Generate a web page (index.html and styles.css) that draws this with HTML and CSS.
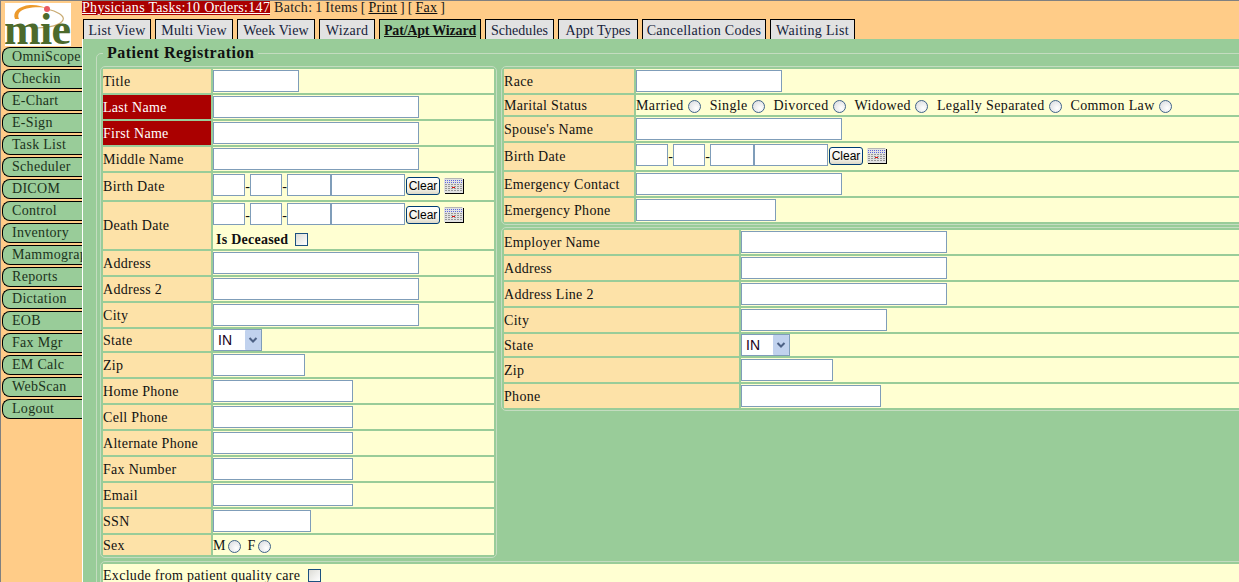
FILE: index.html
```html
<!DOCTYPE html>
<html lang="en">
<head>
<meta charset="utf-8">
<title>Patient Registration</title>
<link rel="stylesheet" href="styles.css">
</head>
<body>
<svg class="defs" width="0" height="0" aria-hidden="true">
  <symbol id="cal" viewBox="0 0 20 16">
    <rect x="1" y="1" width="19" height="15" fill="#000"/>
    <rect x="0" y="0" width="19" height="15" fill="#e2e2e2"/>
    <path d="M1 .5h17" stroke="#b4b4b4"/>
    <path d="M1 2.500h17M1 4.500h17" stroke="#5f68dc" stroke-dasharray="1 1"/>
    <path d="M1 6.500h17M1 8.500h17M1 10.500h17M1 12.500h17" stroke="#989898" stroke-dasharray="2 1"/>
    <rect x="8" y="9" width="3" height="1" fill="#e01010"/>
  </symbol>
</svg>
<div class="app">
  <aside class="side">
    <div class="logo">
      <svg width="66" height="43" viewBox="0 0 66 43">
        <path d="M42 6C52 8 60 13 58 17 56 22 44 25 32 25" fill="none" stroke="#c9ab72" stroke-width="1.2"/>
        <path d="M10 16C7 9 14 3 25 2 31 1.500 37 3 42 5 34 3.500 18 4 14 10 13 12 13 14 14 16z" fill="#ec9a2c"/>
        <circle cx="42" cy="6" r="3" fill="#ea5a62"/>
        <text class="logo-text" x="-1" y="41" textLength="67">mie</text>
      </svg>
    </div>
    <nav class="menu">
      <a class="menu-item">OmniScope</a>
      <a class="menu-item">Checkin</a>
      <a class="menu-item">E-Chart</a>
      <a class="menu-item">E-Sign</a>
      <a class="menu-item">Task List</a>
      <a class="menu-item">Scheduler</a>
      <a class="menu-item">DICOM</a>
      <a class="menu-item">Control</a>
      <a class="menu-item">Inventory</a>
      <a class="menu-item">Mammography</a>
      <a class="menu-item">Reports</a>
      <a class="menu-item">Dictation</a>
      <a class="menu-item">EOB</a>
      <a class="menu-item">Fax Mgr</a>
      <a class="menu-item">EM Calc</a>
      <a class="menu-item">WebScan</a>
      <a class="menu-item">Logout</a>
    </nav>
  </aside>
  <main class="content">
    <div class="status"><a class="alert">Physicians Tasks:10 Orders:147</a> <span class="batch">Batch: 1 Items [ <a class="link">Print</a> ] [ <a class="link">Fax</a> ]</span></div>
    <div class="tabs">
      <a class="tab">List View</a>
      <a class="tab">Multi View</a>
      <a class="tab">Week View</a>
      <a class="tab">Wizard</a>
      <a class="tab active">Pat/Apt Wizard</a>
      <a class="tab">Schedules</a>
      <a class="tab">Appt Types</a>
      <a class="tab">Cancellation Codes</a>
      <a class="tab">Waiting List</a>
    </div>
    <div class="panel">
      <fieldset class="outer">
        <legend>Patient Registration</legend>
        <div class="columns">
          <fieldset class="box">
            <table class="form left">
              <colgroup><col class="c108"><col class="c281"></colgroup>
              <tr><th>Title</th><td><input class="w86" type="text"></td></tr>
              <tr><th class="req">Last Name</th><td><input class="w206" type="text"></td></tr>
              <tr><th class="req">First Name</th><td><input class="w206" type="text"></td></tr>
              <tr><th>Middle Name</th><td><input class="w206" type="text"></td></tr>
              <tr><th class="tall">Birth Date</th><td class="date-cell">
                <div class="date"><input class="w32" type="text"><span class="dash">-</span><input class="w32" type="text"><span class="dash">-</span><input class="w44" type="text"><input class="w74" type="text"><button class="clear" type="button">Clear</button><svg class="cal" width="20" height="16"><use href="#cal"/></svg></div>
              </td></tr>
              <tr><th class="tall">Death Date</th><td class="death-cell">
                <div class="date"><input class="w32" type="text"><span class="dash">-</span><input class="w32" type="text"><span class="dash">-</span><input class="w44" type="text"><input class="w74" type="text"><button class="clear" type="button">Clear</button><svg class="cal" width="20" height="16"><use href="#cal"/></svg></div>
                <div class="deceased"><b>Is Deceased</b><input class="check" type="checkbox"></div>
              </td></tr>
              <tr><th>Address</th><td><input class="w206" type="text"></td></tr>
              <tr><th>Address 2</th><td><input class="w206" type="text"></td></tr>
              <tr><th>City</th><td><input class="w206" type="text"></td></tr>
              <tr><th>State</th><td class="flush"><select class="state"><option>IN</option></select></td></tr>
              <tr><th>Zip</th><td><input class="w92" type="text"></td></tr>
              <tr><th>Home Phone</th><td><input class="w140" type="text"></td></tr>
              <tr><th>Cell Phone</th><td><input class="w140" type="text"></td></tr>
              <tr><th>Alternate Phone</th><td><input class="w140" type="text"></td></tr>
              <tr><th>Fax Number</th><td><input class="w140" type="text"></td></tr>
              <tr><th>Email</th><td><input class="w140" type="text"></td></tr>
              <tr><th>SSN</th><td><input class="w98" type="text"></td></tr>
              <tr class="h20"><th>Sex</th><td class="flush"><div class="radios tight">M<input class="radio" type="radio" name="sex"><span>F</span><input class="radio" type="radio" name="sex"></div></td></tr>
            </table>
          </fieldset>
          <div class="stack">
            <fieldset class="box">
              <table class="form right">
                <colgroup><col class="c130"><col class="c700"></colgroup>
                <tr><th>Race</th><td><input class="w146" type="text"></td></tr>
                <tr class="h20"><th>Marital Status</th><td class="flush"><div class="radios"><span>Married</span><input class="radio" type="radio" name="ms"><span>Single</span><input class="radio" type="radio" name="ms"><span>Divorced</span><input class="radio" type="radio" name="ms"><span>Widowed</span><input class="radio" type="radio" name="ms"><span>Legally Separated</span><input class="radio" type="radio" name="ms"><span>Common Law</span><input class="radio" type="radio" name="ms"></div></td></tr>
                <tr><th>Spouse's Name</th><td><input class="w206" type="text"></td></tr>
                <tr><th class="tall">Birth Date</th><td class="date-cell">
                  <div class="date"><input class="w32" type="text"><span class="dash">-</span><input class="w32" type="text"><span class="dash">-</span><input class="w44" type="text"><input class="w74" type="text"><button class="clear" type="button">Clear</button><svg class="cal" width="20" height="16"><use href="#cal"/></svg></div>
                </td></tr>
                <tr><th>Emergency Contact</th><td><input class="w206" type="text"></td></tr>
                <tr><th>Emergency Phone</th><td><input class="w140" type="text"></td></tr>
              </table>
            </fieldset>
            <fieldset class="box">
              <table class="form right">
                <colgroup><col class="c235"><col class="c595"></colgroup>
                <tr><th>Employer Name</th><td><input class="w206" type="text"></td></tr>
                <tr><th>Address</th><td><input class="w206" type="text"></td></tr>
                <tr><th>Address Line 2</th><td><input class="w206" type="text"></td></tr>
                <tr><th>City</th><td><input class="w146" type="text"></td></tr>
                <tr><th>State</th><td class="flush"><select class="state"><option>IN</option></select></td></tr>
                <tr><th>Zip</th><td><input class="w92" type="text"></td></tr>
                <tr><th>Phone</th><td><input class="w140" type="text"></td></tr>
              </table>
            </fieldset>
          </div>
        </div>
        <fieldset class="box wide">
          <table class="form bottom">
            <tr><td class="excl">Exclude from patient quality care<input class="check" type="checkbox"></td></tr>
          </table>
        </fieldset>
      </fieldset>
    </div>
  </main>
</div>
</body>
</html>
```
FILE: styles.css
```css
html, body {
  margin: 0;
  padding: 0;
  height: 100%;
  overflow: hidden;
}
body {
  background: #ffcc88;
  border-top: 1px solid #808080;
  border-left: 1px solid #808080;
  box-sizing: border-box;
  font-family: "Liberation Serif", serif;
  font-size: 14px;
  letter-spacing: 0.3px;
  color: #111;
}
.defs { position: absolute; }
.app {
  display: flex;
  height: 581px;
  width: 1238px;
  overflow: hidden;
}
.side {
  width: 81px;
  flex: none;
  overflow: hidden;
}
.logo {
  margin: 2px 0 0 4px;
  width: 66px;
  height: 43px;
  background: #fff;
}
.logo svg { display: block; }
.logo-text {
  font-family: "Liberation Serif", serif;
  font-weight: bold;
  font-size: 44px;
  letter-spacing: 0;
  fill: #4c6a2c;
}
.menu {
  display: flex;
  flex-direction: column;
  gap: 2px;
  margin: 1px 0 0 1px;
}
.menu-item {
  box-sizing: border-box;
  display: block;
  height: 20px;
  width: 90px;
  padding-left: 9px;
  line-height: 18px;
  white-space: nowrap;
  background: #99cc99;
  border: 1px solid #000;
  border-bottom-width: 1.5px;
  border-right: 0;
  border-radius: 8px 0 0 8px;
  color: #1c331c;
}
.content {
  flex: 1;
  min-width: 0;
  display: flex;
  flex-direction: column;
}
.status {
  height: 14px;
  line-height: 14px;
  white-space: nowrap;
  color: #222;
}
.batch { word-spacing: -1px; }
.alert {
  background: #aa0000;
  color: #fff;
  text-decoration: underline;
}
.link {
  color: #111;
  text-decoration: underline;
}
.tabs {
  display: flex;
  gap: 4px;
  margin: 4px 0 0 1px;
  height: 20px;
}
.tab {
  box-sizing: border-box;
  flex: none;
  height: 20px;
  padding: 1px 0 0;
  line-height: 20px;
  text-align: center;
  background: #e2e2e2;
  border: 1px solid #000;
  border-bottom: 0;
  color: #16233a;
  white-space: nowrap;
}
.tab:nth-child(1) { width: 68px; }
.tab:nth-child(2) { width: 78px; letter-spacing: 0.15px; }
.tab:nth-child(3) { width: 78px; letter-spacing: 0.15px; }
.tab:nth-child(4) { width: 56px; }
.tab:nth-child(5) { width: 102px; }
.tab:nth-child(6) { width: 69px; letter-spacing: 0.05px; }
.tab:nth-child(7) { width: 80px; letter-spacing: 0.05px; }
.tab:nth-child(8) { width: 124px; }
.tab:nth-child(9) { width: 85px; }
.tab.active {
  background: #99cc99;
  font-weight: bold;
  letter-spacing: -0.2px;
  color: #111;
  text-decoration: underline;
}
.panel {
  flex: 1;
  background: #99cc99;
  border-left: 1px solid #fff;
  padding: 6px 0 0 13px;
  min-height: 0;
  overflow: hidden;
}
fieldset {
  margin: 0;
  padding: 0;
  min-width: 0;
  border: 1px solid #c4dcc0;
  border-radius: 5px;
}
.outer {
  width: 1400px;
  padding: 5px 0 0 3px;
}
legend {
  height: 16px;
  line-height: 16px;
  margin-left: 3px;
  padding: 0 4px;
  font-weight: bold;
  font-size: 16px;
  letter-spacing: 0.5px;
  color: #111;
}
.columns {
  display: flex;
  gap: 4px;
  align-items: flex-start;
}
.stack {
  display: flex;
  flex-direction: column;
  gap: 2px;
}
.wide {
  margin-top: 3px;
  width: 1200px;
}
.form {
  table-layout: fixed;
  border-collapse: separate;
  border-spacing: 2px;
}
.left { width: 395px; }
.right { width: 840px; }
.bottom { width: 1190px; }
.c108 { width: 108px; }
.c281 { width: 281px; }
.c130 { width: 130px; }
.c700 { width: 704px; }
.c235 { width: 235px; }
.c595 { width: 599px; }
th {
  background: #fde2a8;
  font-weight: normal;
  text-align: left;
  padding: 2px 0 0;
  white-space: nowrap;
  overflow: hidden;
  color: #111;
}
th.tall { padding: 0; }
th.req {
  background: #aa0000;
  color: #fff;
}
td {
  background: #ffffd2;
  padding: 1px 0;
  height: 22px;
}
td.flush { padding: 0; }
tr.h20 td { height: 20px; }
tr.h20 th { height: 18px; }
.date-cell { padding: 1px 0 4px; }
.death-cell { padding: 1px 0 0; height: 46px; vertical-align: top; }
input[type="text"] {
  display: block;
  box-sizing: border-box;
  height: 22px;
  margin: 0;
  padding: 0 2px;
  background: #fff;
  border: 1px solid #7f9db9;
}
.w32 { width: 32px; }
.w44 { width: 44px; }
.w74 { width: 74px; }
.w86 { width: 86px; }
.w92 { width: 92px; }
.w98 { width: 98px; }
.w140 { width: 140px; }
.w146 { width: 146px; }
.w206 { width: 206px; }
.date {
  display: flex;
  align-items: center;
  height: 22px;
}
.dash {
  width: 5px;
  text-align: center;
  letter-spacing: 0;
  padding-top: 3px;
}
.clear {
  box-sizing: border-box;
  width: 34px;
  height: 18px;
  margin: 2px 0 0 1px;
  padding: 0;
  font-family: "Liberation Sans", sans-serif;
  font-size: 12px;
  letter-spacing: 0;
  color: #000;
  background: linear-gradient(#ffffff, #f2f0e6 70%, #dcd8c8);
  border: 1px solid #003c74;
  border-radius: 3px;
}
.cal {
  display: block;
  margin: 2px 0 0 4px;
  flex: none;
}
.deceased {
  display: flex;
  align-items: center;
  height: 18px;
  margin: 6px 0 0 3px;
}
.deceased b { letter-spacing: 0.25px; }
.check {
  appearance: none;
  box-sizing: border-box;
  flex: none;
  width: 13px;
  height: 13px;
  margin: -1px 0 0 7px;
  background: linear-gradient(135deg, #dcdcd6, #ffffff);
  border: 1px solid #1c5180;
}
.radio {
  appearance: none;
  box-sizing: border-box;
  flex: none;
  width: 13px;
  height: 13px;
  margin: 0 0 0 4px;
  border-radius: 50%;
  background: radial-gradient(circle at 65% 65%, #ffffff, #d6d8dc);
  border: 1px solid #3f6389;
}
.radios {
  display: flex;
  align-items: center;
  box-sizing: border-box;
  white-space: nowrap;
  height: 20px;
  padding-top: 2px;
  letter-spacing: 0.36px;
}
.radios span { margin-left: 9px; }
.radios span:first-child { margin-left: 0; }
.radios.tight { letter-spacing: 0; }
.radios.tight .radio { margin-left: 3px; }
.radios.tight span { margin-left: 6px; }
.state {
  appearance: none;
  display: block;
  box-sizing: border-box;
  width: 49px;
  height: 22px;
  margin: 0;
  padding: 0 0 0 4px;
  font-family: "Liberation Sans", sans-serif;
  font-size: 14px;
  letter-spacing: 0;
  color: #200020;
  border: 1px solid #7f9db9;
  border-radius: 0;
  background: #fff url("data:image/svg+xml,%3Csvg xmlns='http://www.w3.org/2000/svg' width='16' height='20'%3E%3Crect width='16' height='20' rx='1' fill='%23c1d2ee'/%3E%3Cpath d='M4.5 8l3.5 3.5L11.5 8' fill='none' stroke='%234d6185' stroke-width='2'/%3E%3C/svg%3E") no-repeat right top;
}
.excl {
  padding: 3px 0 0;
  height: 21px;
  vertical-align: top;
  line-height: 18px;
}
.excl .check { margin: 0 0 0 8px; vertical-align: -2px; }
```
